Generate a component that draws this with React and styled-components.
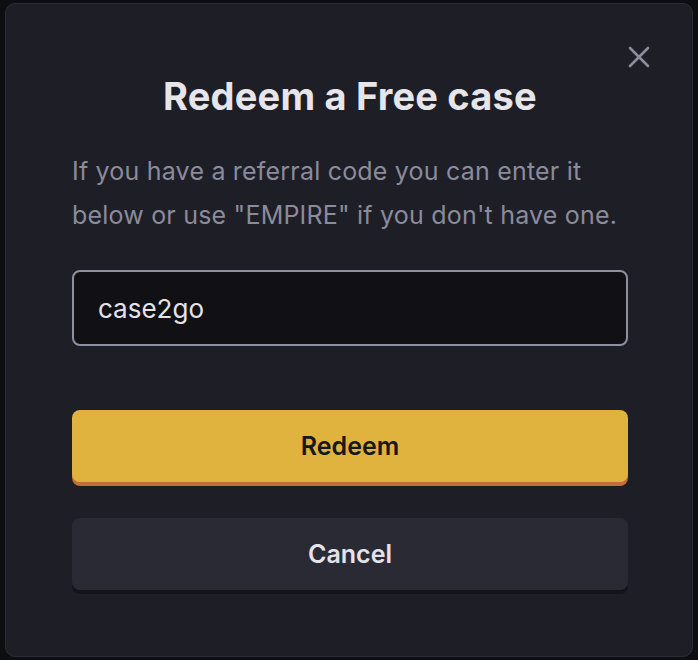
import styled, { createGlobalStyle } from 'styled-components';

const Global = createGlobalStyle`
  html, body {
    margin: 0;
    padding: 0;
    background: #0d0e12;
  }
  * { box-sizing: border-box; }
`;

const Page = styled.div`
  width: 698px;
  height: 660px;
  padding: 3px 5px 3px 5px;
  font-family: Inter, 'Noto Sans', sans-serif;
`;

const Modal = styled.div`
  position: relative;
  height: 654px;
  background: #1d1e26;
  border: 1px solid #2b2c35;
  border-radius: 10px;
  padding: 65px 64px 0 66px;
  display: flex;
  flex-direction: column;
`;

const CloseButton = styled.button`
  position: absolute;
  top: 38px;
  right: 38px;
  width: 30px;
  height: 30px;
  background: none;
  border: none;
  padding: 0;
  display: flex;
  align-items: center;
  justify-content: center;
  cursor: pointer;
`;

const Title = styled.h2`
  margin: 0;
  text-align: center;
  color: #e6e6ea;
  font-size: 38px;
  font-weight: 700;
  line-height: 54px;
  letter-spacing: 0.2px;
`;

const Description = styled.p`
  margin: 26px 0 0;
  color: #8b8b9c;
  font-size: 25px;
  line-height: 44px;
  letter-spacing: 0.2px;
`;

const CodeInput = styled.input`
  margin-top: 33px;
  height: 76px;
  width: 100%;
  background: #101015;
  border: 2px solid #8f8f9f;
  border-radius: 8px;
  padding: 0 24px;
  color: #e4e4e8;
  font-family: Inter, 'Noto Sans', sans-serif;
  font-size: 26px;
  outline: none;
  caret-color: #e4e4e8;
`;

const ActionButton = styled.button`
  margin-top: ${(p) => p.$gap}px;
  flex: none;
  height: 72px;
  width: 100%;
  border: none;
  border-radius: 8px;
  background: ${(p) => (p.$primary ? '#dfb33d' : '#2a2a35')};
  box-shadow: 0 4px 0 ${(p) => (p.$primary ? '#c46d3a' : '#14151a')};
  color: ${(p) => (p.$primary ? '#17171c' : '#e4e4e8')};
  font-family: Inter, 'Noto Sans', sans-serif;
  font-size: 25px;
  font-weight: 600;
  cursor: pointer;
`;

const App = () => (
  <>
    <Global />
    <Page>
      <Modal>
        <CloseButton aria-label="Close">
          <svg width="24" height="24" viewBox="0 0 24 24">
            <path d="M3 3 L21 21 M21 3 L3 21" stroke="#8c8c9c" strokeWidth="2.6" strokeLinecap="round" />
          </svg>
        </CloseButton>
        <Title>Redeem a Free case</Title>
        <Description>
          If you have a referral code you can enter it below or use "EMPIRE" if you don't have one.
        </Description>
        <CodeInput defaultValue="case2go" autoFocus />
        <ActionButton $primary $gap={64}>Redeem</ActionButton>
        <ActionButton $gap={36}>Cancel</ActionButton>
      </Modal>
    </Page>
  </>
);

export default App;
